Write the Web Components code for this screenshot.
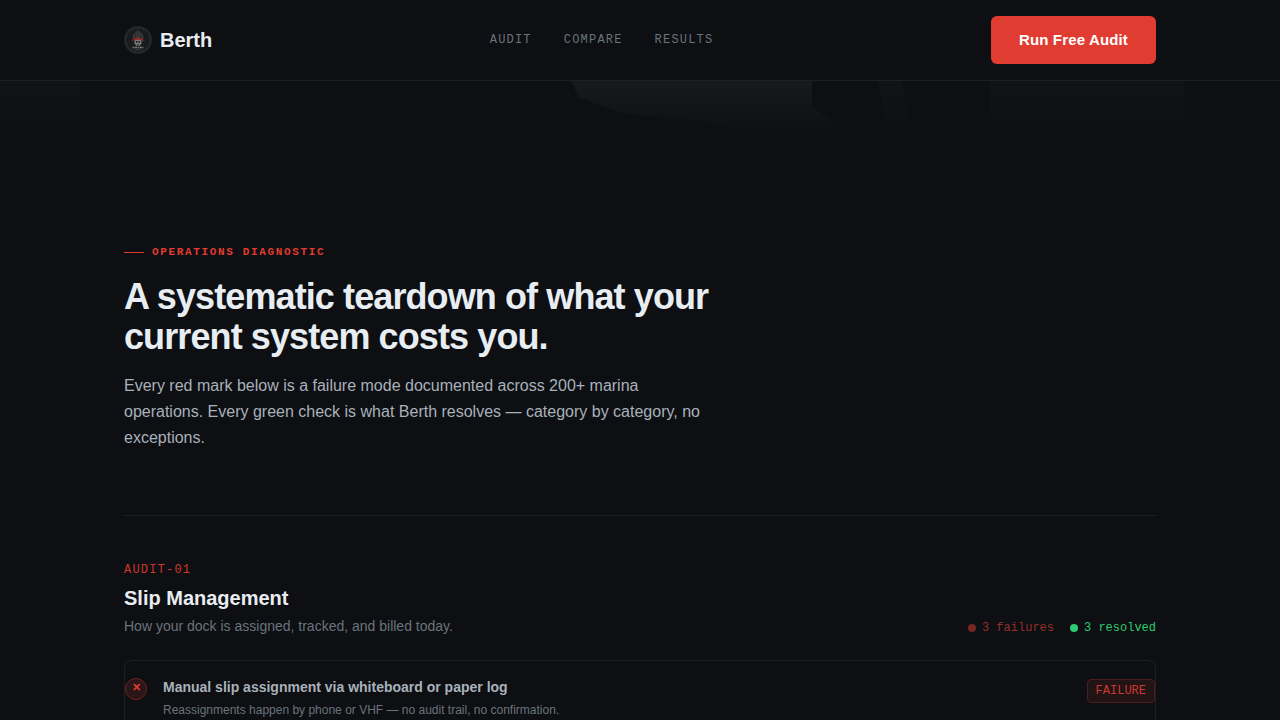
<!DOCTYPE html>
<html lang="en">
<head>
<meta charset="utf-8">
<meta name="viewport" content="width=device-width, initial-scale=1">
<title>Berth — Operations Diagnostic</title>
<style>
  :root {
    --bg: #0d0f12;
    --line: #1d2023;
    --text: #e8edf2;
    --text-2: #a9b1bb;
    --text-3: #6b737d;
    --red: #e03c31;
    --green: #2ecc71;
    --sans: "Liberation Sans", Arial, sans-serif;
    --mono: "Liberation Mono", "Courier New", monospace;
  }

  html { overflow-x: hidden; scrollbar-width: none; }

  body {
    margin: 0;
    background: var(--bg);
    color: var(--text);
    font-family: var(--sans);
  }
</style>
</head>
<body>

<berth-header>
  <a slot="nav" href="#audit">Audit</a>
  <a slot="nav" href="#compare">Compare</a>
  <a slot="nav" href="#results">Results</a>
  <berth-button slot="action">Run Free Audit</berth-button>
</berth-header>

<main>
  <berth-backdrop></berth-backdrop>
  <page-intro kicker="Operations Diagnostic">
    <span slot="title">A systematic teardown of what your current system costs you.</span>
    Every red mark below is a failure mode documented across 200+ marina operations. Every green check is what Berth resolves — category by category, no exceptions.
  </page-intro>

  <audit-section id="audit" code="AUDIT-01" failures="3" resolved="3">
    <span slot="title">Slip Management</span>
    <span slot="summary">How your dock is assigned, tracked, and billed today.</span>
    <audit-row>
      <span slot="title">Manual slip assignment via whiteboard or paper log</span>
      Reassignments happen by phone or VHF — no audit trail, no confirmation.
    </audit-row>
  </audit-section>
</main>

<script>
/* ─── LOGO ─── */
class BerthLogo extends HTMLElement {
  constructor() {
    super();
    this.attachShadow({ mode: 'open' }).innerHTML = `
      <style>
        :host { display: block; width: 28px; height: 28px; }
        svg { display: block; width: 100%; height: 100%; }
      </style>
      <svg viewBox="0 0 28 28" aria-hidden="true">
        <circle cx="14" cy="14" r="14" fill="#242527"/>
        <circle cx="14" cy="14" r="12" fill="#191b1d" stroke="#2d2f31" stroke-dasharray="3 1"/>
        <path d="M8 12.5 L9.5 8 L14 4 L18.5 8 L20 12.5 Z" fill="#38393b"/>
        <path d="M14 4 V11 M11.5 7 V12 M16.5 7 V12" stroke="#292b2d"/>
        <path d="M7.5 15 Q9 12 14 11.5 Q19 12 20.5 15 L18 14.5 Q14 12.5 10 14.5 Z" fill="#9c2525"/>
        <path d="M10.5 14.5 Q14 12.5 17.5 14.5 V17.5 L15.5 20 H12.5 L10.5 17.5 Z" fill="#77797b"/>
        <path d="M12 15 H13.5 V16.8 H12 Z M14.5 15 H16 V16.8 H14.5 Z M13 18.5 H15 V19.5 H13 Z" fill="#17191b"/>
        <path d="M8.5 21.5 H19.5" stroke="#77797b" stroke-width="1.6" stroke-dasharray="2 .5"/>
        <path d="M11 23.5 H17" stroke="#3c3e40"/>
      </svg>
    `;
  }
}

/* ─── BUTTON ─── */
class BerthButton extends HTMLElement {
  constructor() {
    super();
    this.attachShadow({ mode: 'open' }).innerHTML = `
      <style>
        :host { display: block; }
        button {
          min-height: 48px;
          padding: 0 28px;
          border: 0;
          border-radius: 6px;
          background: var(--red);
          color: #fff;
          font: 700 15px/20px var(--sans);
          letter-spacing: 0.01em;
          white-space: nowrap;
          cursor: pointer;
        }
        button:hover { background: #c93227; }
        button:focus-visible { outline: 2px solid #fff; outline-offset: 2px; }
      </style>
      <button type="button"><slot></slot></button>
    `;
  }
}

/* ─── HEADER ─── */
class BerthHeader extends HTMLElement {
  constructor() {
    super();
    this.attachShadow({ mode: 'open' }).innerHTML = `
      <style>
        :host { display: block; border-bottom: 1px solid var(--line); }
        header {
          display: flex;
          align-items: center;
          justify-content: space-between;
          max-width: 1032px;
          min-height: 80px;
          margin: 0 auto;
          padding: 0 24px;
        }
        .brand {
          display: flex;
          align-items: center;
          gap: 8px;
          color: var(--text);
          font: 700 20px/24px var(--sans);
          text-decoration: none;
        }
        nav { display: flex; gap: 32px; }
        ::slotted(a) {
          color: var(--text-3);
          font: 12px/20px var(--mono);
          letter-spacing: 0.1em;
          text-transform: uppercase;
          text-decoration: none;
        }
      </style>
      <header>
        <a class="brand" href="#"><berth-logo></berth-logo><span>Berth</span></a>
        <nav aria-label="Main"><slot name="nav"></slot></nav>
        <slot name="action"></slot>
      </header>
    `;
  }
}

/* ─── BACKDROP: faint shapes fading out under the header ─── */
class BerthBackdrop extends HTMLElement {
  constructor() {
    super();
    this.attachShadow({ mode: 'open' }).innerHTML = `
      <style>
        :host {
          position: absolute;
          left: 0;
          right: 0;
          height: 64px;
          pointer-events: none;
        }
        svg { display: block; width: 100%; height: 100%; }
      </style>
      <svg viewBox="0 0 1280 64" preserveAspectRatio="none" aria-hidden="true">
        <defs>
          <linearGradient id="near" x1="0" y1="0" x2="0" y2="54" gradientUnits="userSpaceOnUse">
            <stop offset="0" stop-color="#17191a"/>
            <stop offset="1" stop-color="#0d0f12"/>
          </linearGradient>
          <linearGradient id="far" x1="0" y1="0" x2="0" y2="56" gradientUnits="userSpaceOnUse">
            <stop offset="0" stop-color="#111314"/>
            <stop offset="1" stop-color="#0d0f12"/>
          </linearGradient>
        </defs>
        <path fill="url(#near)" d="M572 0 H812 V26 L850 54 H760 L700 40 L620 32 L578 16 Z"/>
        <path fill="url(#far)" d="M878 0 H902 L910 50 H888 Z M0 0 H80 V56 H0 Z M990 0 H1184 V56 H990 Z"/>
      </svg>
    `;
  }
}

/* ─── INTRO ─── */
class PageIntro extends HTMLElement {
  constructor() {
    super();
    this.attachShadow({ mode: 'open' });
  }

  connectedCallback() {
    this.shadowRoot.innerHTML = `
      <style>
        :host {
          display: block;
          position: relative;
          max-width: 1032px;
          margin: 0 auto;
          padding: 160px 24px 0;
        }
        .kicker {
          display: flex;
          align-items: center;
          gap: 8px;
          margin: 0 0 14px;
          color: var(--red);
          font: 700 11px/22px var(--mono);
          letter-spacing: 0.15em;
          text-transform: uppercase;
        }
        .kicker::before { content: ""; width: 20px; height: 1px; background: var(--red); }
        h1 {
          max-width: 640px;
          margin: 0 0 16px;
          font-size: 36px;
          line-height: 40px;
          letter-spacing: -0.025em;
        }
        .lead {
          max-width: 580px;
          margin: 0;
          padding-bottom: 64px;
          color: var(--text-2);
          font-size: 16px;
          line-height: 26px;
        }
        hr { margin: 0; border: 0; border-top: 1px solid var(--line); }
      </style>
      <p class="kicker">${this.getAttribute('kicker')}</p>
      <h1><slot name="title"></slot></h1>
      <p class="lead"><slot></slot></p>
      <hr>
    `;
  }
}

/* ─── AUDIT SECTION ─── */
class AuditSection extends HTMLElement {
  constructor() {
    super();
    this.attachShadow({ mode: 'open' });
  }

  connectedCallback() {
    this.shadowRoot.innerHTML = `
      <style>
        :host {
          display: block;
          max-width: 1032px;
          margin: 0 auto;
          padding: 44px 24px 64px;
        }
        .head {
          display: flex;
          align-items: flex-end;
          justify-content: space-between;
          gap: 24px;
          margin-bottom: 24px;
        }
        .code {
          margin: 0 0 4px;
          color: var(--red);
          font: 12px/20px var(--mono);
          letter-spacing: 0.1em;
          opacity: 0.9;
        }
        h2 { margin: 0 0 4px; font-size: 20px; line-height: 28px; }
        .summary { margin: 0; color: var(--text-3); font-size: 14px; line-height: 20px; }
        .tally {
          display: flex;
          gap: 16px;
          margin: 0;
          padding: 0;
          list-style: none;
          font: 12px/16px var(--mono);
        }
        .tally li { display: flex; align-items: center; gap: 6px; }
        .tally li::before {
          content: "";
          width: 8px;
          height: 8px;
          border-radius: 50%;
          background: currentColor;
        }
        .tally .fail { color: #962e29; }
        .tally .fail::before { background: #762723; }
        .tally .pass { color: var(--green); }
        .rows { border: 1px solid var(--line); border-radius: 8px; }
      </style>
      <div class="head">
        <div>
          <p class="code">${this.getAttribute('code')}</p>
          <h2><slot name="title"></slot></h2>
          <p class="summary"><slot name="summary"></slot></p>
        </div>
        <ul class="tally">
          <li class="fail">${this.getAttribute('failures')} failures</li>
          <li class="pass">${this.getAttribute('resolved')} resolved</li>
        </ul>
      </div>
      <div class="rows"><slot></slot></div>
    `;
  }
}

/* ─── AUDIT ROW ─── */
class AuditRow extends HTMLElement {
  constructor() {
    super();
    this.attachShadow({ mode: 'open' }).innerHTML = `
      <style>
        :host {
          display: grid;
          grid-template-columns: 22px 1fr auto;
          align-items: start;
          gap: 16px;
          padding: 16px 0;
        }
        .mark {
          display: flex;
          justify-content: center;
          box-sizing: border-box;
          width: 22px;
          height: 22px;
          margin-top: 1px;
          border: 1px solid #6b2322;
          border-radius: 50%;
          background: #2a1517;
          color: var(--red);
          font: 700 11px/16px var(--sans);
        }
        h3 { margin: 0 0 4px; color: var(--text-2); font-size: 14px; line-height: 20px; }
        p { margin: 0; color: var(--text-3); font-size: 12px; line-height: 18px; }
        .status {
          margin-top: 2px;
          padding: 3px 8px;
          border: 1px solid #4a1d1e;
          border-radius: 4px;
          background: #221315;
          color: #cb3a31;
          font: 12px/16px var(--mono);
        }
      </style>
      <span class="mark" aria-hidden="true">✕</span>
      <div>
        <h3><slot name="title"></slot></h3>
        <p><slot></slot></p>
      </div>
      <span class="status">FAILURE</span>
    `;
  }
}

customElements.define('berth-logo', BerthLogo);
customElements.define('berth-button', BerthButton);
customElements.define('berth-header', BerthHeader);
customElements.define('berth-backdrop', BerthBackdrop);
customElements.define('page-intro', PageIntro);
customElements.define('audit-section', AuditSection);
customElements.define('audit-row', AuditRow);
</script>
</body>
</html>
